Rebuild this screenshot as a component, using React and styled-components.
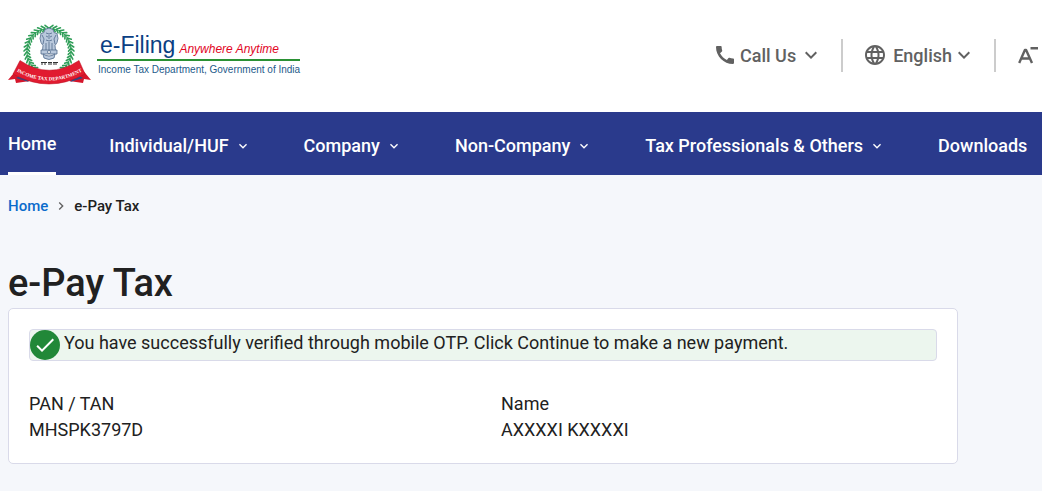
import React from "react";
import styled, { createGlobalStyle } from "styled-components";
import {
  MdCall,
  MdCheck,
  MdChevronRight,
  MdExpandMore,
  MdLanguage,
} from "react-icons/md";

const GlobalStyle = createGlobalStyle`
  * {
    box-sizing: border-box;
  }

  body {
    margin: 0;
    background: #f5f7fb;
    color: #212121;
    font-family: Roboto, sans-serif;
    overflow-x: hidden;
  }

  h1, p, ol, ul, dl, dd {
    margin: 0;
    padding: 0;
  }

  a {
    color: inherit;
    text-decoration: none;
  }

  button {
    border: 0;
    padding: 0;
    background: none;
    color: inherit;
    font: inherit;
    cursor: pointer;
  }
`;

const StyledHeader = styled.header`
  display: flex;
  justify-content: space-between;
  align-items: center;
  height: 112px;
  padding: 0 2px 2px 8px;
  background: #fff;
`;

const Brand = styled.a`
  display: flex;
  align-items: center;
  gap: 6px;

  .emblem {
    display: block;
    flex-shrink: 0;
    width: 83px;
    height: 62px;
  }
`;

const BrandText = styled.span`
  display: flex;
  flex-direction: column;
  font-family: "Liberation Sans", Arial, sans-serif;
  white-space: nowrap;

  .title {
    display: flex;
    align-items: baseline;
    gap: 4px;
    padding: 0 3px;
    line-height: 28px;
    border-bottom: 2px solid #2a9134;
    color: #0b3f83;
    font-size: 23px;
  }

  .tagline {
    color: #e2061f;
    line-height: 16px;
    font-size: 12px;
    font-style: italic;
  }

  .department {
    padding-left: 1px;
    line-height: 18px;
    color: #1d5a8a;
    font-size: 10px;
  }
`;

const Tools = styled.div`
  display: flex;
  align-items: center;
  color: #616161;
  font-size: 18px;
  font-weight: 500;
`;

const ToolButton = styled.button`
  display: flex;
  align-items: center;
  gap: ${({ $gap }) => $gap}px;
  height: 33px;
  white-space: nowrap;

  svg {
    flex-shrink: 0;
  }
`;

const Divider = styled.span`
  width: 2px;
  height: 33px;
  margin: 0 20px 0 18px;
  background: #ccc;
`;

const StyledNav = styled.nav`
  background: #2a3a8c;
  color: #fff;

  ul {
    display: flex;
    gap: 53px;
    height: 63px;
    padding: 0 8px;
    list-style: none;
  }
`;

const NavItem = styled.a`
  display: flex;
  align-items: center;
  gap: 6px;
  height: 100%;
  padding-top: 4px;
  font-size: 18px;
  font-weight: 500;
  white-space: nowrap;

  &.active-nav-link {
    padding-top: 3px;
    border-bottom: 3px solid #fff;
  }
`;

const Main = styled.main`
  padding: 20px 84px 24px 8px;
`;

const Breadcrumb = styled.ol`
  display: flex;
  align-items: center;
  gap: 5px;
  line-height: 22px;
  list-style: none;
  font-size: 15px;
  font-weight: 500;

  li {
    display: flex;
  }

  a {
    color: #0b6bcb;
  }

  svg {
    color: #616161;
  }
`;

const PageTitle = styled.h1`
  margin-top: 42px;
  line-height: 49px;
  font-size: 38px;
  font-weight: 500;
`;

const Card = styled.section`
  padding: 20px;
  border: 1px solid #d9dae9;
  border-radius: 5px;
  background: #fff;
`;

const Alert = styled.div`
  display: flex;
  gap: 4px;
  border: 1px solid #d9dae9;
  border-radius: 4px;
  background: #ecf6ee;
  font-size: 18px;
  line-height: 26px;
`;

const AlertIcon = styled.span`
  display: flex;
  align-items: center;
  justify-content: center;
  flex-shrink: 0;
  width: 30px;
  height: 30px;
  border-radius: 50%;
  background: #218838;
  color: #fff;
`;

const Details = styled.dl`
  display: grid;
  grid-template-columns: 1fr 1fr;
  gap: 36px;
  margin-top: 30px;
  font-size: 18px;
  line-height: 26px;
`;

const navLinks = [
  { name: "Home", active: true },
  { name: "Individual/HUF", hasMenu: true },
  { name: "Company", hasMenu: true },
  { name: "Non-Company", hasMenu: true },
  { name: "Tax Professionals & Others", hasMenu: true },
  { name: "Downloads" },
];

const details = [
  { label: "PAN / TAN", value: "MHSPK3797D" },
  { label: "Name", value: "AXXXXI KXXXXI" },
];

// one side of the wreath, the other side is mirrored
const leaves = Array.from({ length: 16 }, (_, i) => {
  const angle = 98 + i * 9;
  const rad = (angle * Math.PI) / 180;
  return {
    angle,
    x: 41 + 22 * Math.cos(rad),
    y: 27 - 23 * Math.sin(rad),
  };
});

function Wreath() {
  return (
    <g fill="none" stroke="#2f9e58" strokeWidth="1.6" strokeLinecap="round">
      <path d="M37 5C25 7 19 16 19 27c0 9 4 16 11 21" strokeWidth="1" />
      {leaves.map(({ angle, x, y }) => (
        <g
          key={angle}
          transform={`translate(${x} ${y}) rotate(${-angle})`}
        >
          <path d="M0 2.500L3 -.5M0 2.500L-2.500 -.5" />
        </g>
      ))}
    </g>
  );
}

function Emblem() {
  return (
    <svg className="emblem" viewBox="0 0 83 62" aria-hidden="true">
      <Wreath />
      <g transform="matrix(-1 0 0 1 82 0)">
        <Wreath />
      </g>

      {/* lion capital */}
      <g fill="#b9c8dc" stroke="#51698c" strokeWidth=".8">
        <path d="M37 5.500q4-3 8 0l1 3 3 1 1 5-1 4-2 3 .5 5h-13l.5-5-2-3-1-4 1-5 3-1z" />
        <path
          d="M38 9q3 2 6 0M38 12l2 1M44 12l-2 1M41 11v4M38 16q3 2 6 0M34 11l2 4-1 5M48 11l-2 4 1 5M38 19v7M44 19v7M41 18v8"
          fill="none"
        />
        <path d="M33 26h16v4H33z" />
        <circle cx="41" cy="28" r="1.500" fill="#fff" />
        <path d="M35 30q6 4 12 0l-1 4q-5 3-10 0z" />
      </g>
      <path
        d="M33 38.500h6M40 38.500h4M45 38.500h5M34 38v3M37 39v2M41 38v3M43 39v2M46 38v3M48 39v2"
        fill="none"
        stroke="#333"
        strokeWidth="1"
      />

      {/* ribbon */}
      <path d="M10 44L0 56l7-1 1 4 14-2z" fill="#d5152b" />
      <path d="M73 44l10 12-7-1-1 4-14-2z" fill="#d5152b" />
      <path d="M8 54l6-3 7 7zM75 54l-6-3-7 7z" fill="#2c4a86" />
      <path
        d="M12 36.500Q41 56 71 36.500L77 50Q41 70 5 50z"
        fill="#e11b30"
        stroke="#b91023"
        strokeWidth=".5"
      />
      <path id="ribbonLine" d="M6 46Q41 67 77 46" fill="none" />
      <text
        fill="#fff"
        fontFamily="Liberation Serif, serif"
        fontSize="5"
        fontWeight="700"
        textAnchor="middle"
      >
        <textPath href="#ribbonLine" startOffset="50%">
          INCOME TAX DEPARTMENT
        </textPath>
      </text>
    </svg>
  );
}

function FontSizeIcon() {
  return (
    <svg width="24" height="24" viewBox="0 0 24 24" aria-hidden="true">
      <path
        d="M3.200 20L8.900 7h1.200L16 20M5.500 15.500h8"
        fill="none"
        stroke="currentColor"
        strokeWidth="2.400"
        strokeLinejoin="round"
      />
      <path d="M14.500 4H22v2.500h-7.500z" fill="currentColor" />
    </svg>
  );
}

function Header() {
  return (
    <StyledHeader>
      <Brand href="#home">
        <Emblem />
        <BrandText>
          <span className="title">
            e-Filing <span className="tagline">Anywhere Anytime</span>
          </span>
          <span className="department">
            Income Tax Department, Government of India
          </span>
        </BrandText>
      </Brand>

      <Tools>
        <ToolButton type="button" $gap={3}>
          <MdCall size={24} />
          Call Us
          <MdExpandMore size={24} />
        </ToolButton>
        <Divider />
        <ToolButton type="button" $gap={6}>
          <MdLanguage size={24} />
          <span>English</span>
        </ToolButton>
        <ToolButton type="button" aria-label="Choose language">
          <MdExpandMore size={24} />
        </ToolButton>
        <Divider />
        <ToolButton type="button" aria-label="Decrease text size">
          <FontSizeIcon />
        </ToolButton>
      </Tools>
    </StyledHeader>
  );
}

function NavBar() {
  return (
    <StyledNav>
      <ul>
        {navLinks.map(({ name, active, hasMenu }) => (
          <li key={name}>
            <NavItem href="#nav" className={active ? "active-nav-link" : null}>
              {name}
              {hasMenu && <MdExpandMore size={16} />}
            </NavItem>
          </li>
        ))}
      </ul>
    </StyledNav>
  );
}

export default function App() {
  return (
    <>
      <GlobalStyle />
      <Header />
      <NavBar />

      <Main>
        <Breadcrumb>
          <li>
            <a href="#home">Home</a>
          </li>
          <li>
            <MdChevronRight size={16} />
          </li>
          <li>e-Pay Tax</li>
        </Breadcrumb>

        <PageTitle>e-Pay Tax</PageTitle>

        <Card>
          <Alert role="status">
            <AlertIcon>
              <MdCheck size={24} />
            </AlertIcon>
            <p>
              You have successfully verified through mobile OTP. Click Continue
              to make a new payment.
            </p>
          </Alert>

          <Details>
            {details.map(({ label, value }) => (
              <div key={label}>
                <dt>{label}</dt>
                <dd>{value}</dd>
              </div>
            ))}
          </Details>
        </Card>
      </Main>
    </>
  );
}
